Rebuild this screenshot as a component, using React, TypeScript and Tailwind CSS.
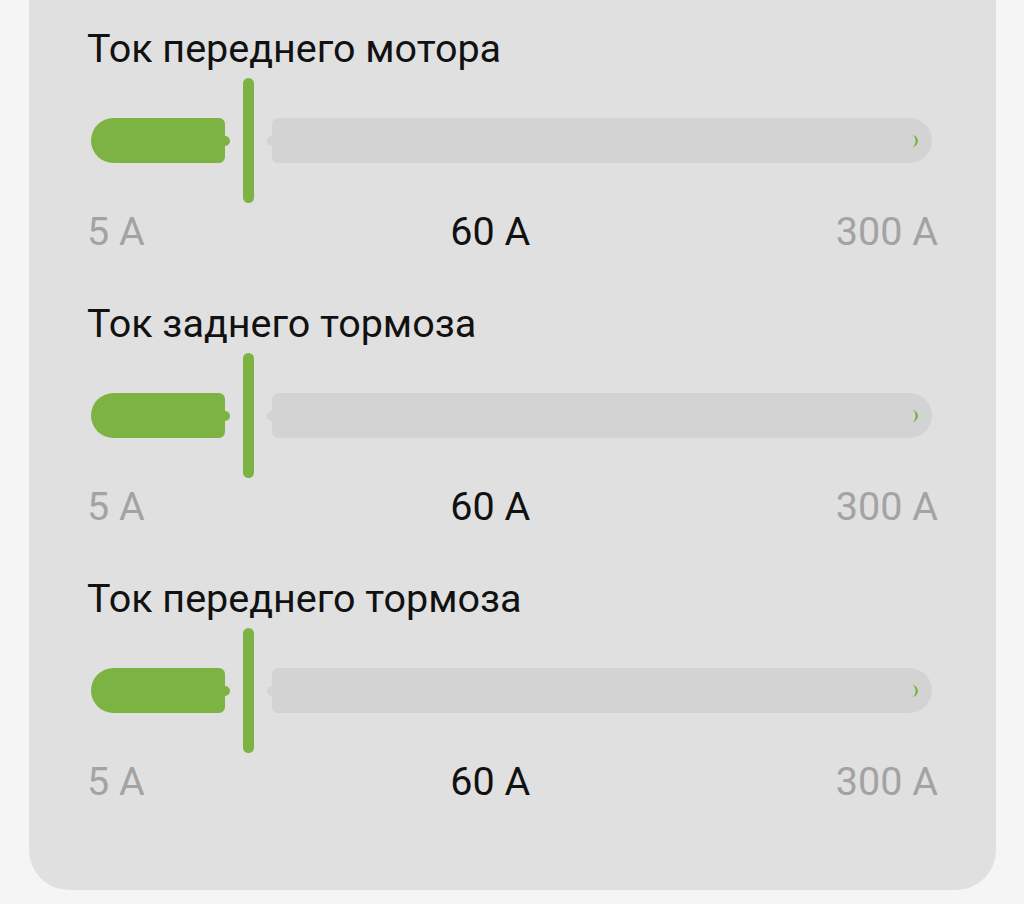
import React from 'react';

interface CurrentSetting {
  title: string;
  min: number;
  max: number;
  value: number;
}

const settings: CurrentSetting[] = [
  { title: 'Ток переднего мотора', min: 5, max: 300, value: 60 },
  { title: 'Ток заднего тормоза', min: 5, max: 300, value: 60 },
  { title: 'Ток переднего тормоза', min: 5, max: 300, value: 60 },
];

// ширина всей дорожки слайдера в пикселях
const TRACK_WIDTH = 841;

function CurrentSlider({ setting }: { setting: CurrentSetting }) {
  const ratio = (setting.value - setting.min) / (setting.max - setting.min);
  // центр ручки, от него отнимаем половину ручки и зазор
  const activeWidth = Math.round(ratio * TRACK_WIDTH) + 0.5 - 5.5 - 18;

  return (
    <div className="flex flex-col">
      <div className="text-[39.5px] leading-[48px] text-[#111]">{setting.title}</div>

      <div className="mt-[5px] ml-[4px] mr-[6px] flex h-[125px] items-center">
        <div
          className="relative h-[45px] shrink-0 rounded-l-[22.5px] rounded-r-[6px] bg-[#7cb342]"
          style={{ width: activeWidth }}
        >
          <span className="absolute top-1/2 right-[-5px] h-[10px] w-[10px] -translate-y-1/2 rounded-full bg-[#7cb342]" />
        </div>
        <div className="ml-[18px] h-[125px] w-[11px] shrink-0 rounded-full bg-[#7cb342]" />
        <div className="relative ml-[18px] h-[45px] flex-1 rounded-l-[6px] rounded-r-[22.5px] bg-[#d3d3d3]">
          <span className="absolute top-1/2 left-[-5px] h-[10px] w-[10px] -translate-y-1/2 rounded-full bg-[#d3d3d3]" />
          <svg
            className="absolute top-1/2 right-[14px] -translate-y-1/2"
            width="7"
            height="12"
            viewBox="0 0 7 12"
          >
            <path d="M1 0 A6 6 0 0 1 1 12 A3.5 6 0 0 0 1 0 Z" fill="#7cb342" />
          </svg>
        </div>
      </div>

      <div className="mt-[5px] flex justify-between text-[39.5px] leading-[48px]">
        <span className="text-[#a3a3a3]">{setting.min} A</span>
        <span className="text-[#111]">{setting.value} A</span>
        <span className="text-[#a3a3a3]">{setting.max} A</span>
      </div>
    </div>
  );
}

export default function App() {
  return (
    <div
      className="min-h-screen bg-[#f5f5f5] px-[28px] pb-[14px]"
      style={{ fontFamily: 'Roboto, "Noto Sans", sans-serif' }}
    >
      <div className="ml-[1px] flex flex-col gap-[44px] rounded-b-[40px] bg-[#e0e0e0] px-[58px] pt-[25px] pb-[84px]">
        {settings.map((s) => (
          <CurrentSlider key={s.title} setting={s} />
        ))}
      </div>
    </div>
  );
}
